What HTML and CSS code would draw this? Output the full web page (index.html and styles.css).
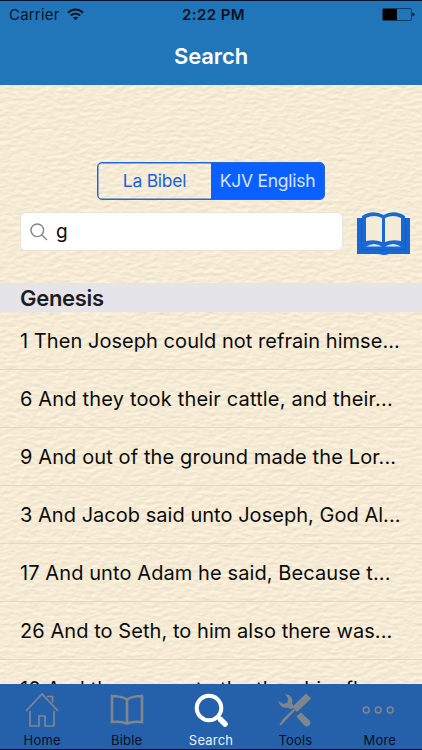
FILE: index.html
```html
<!DOCTYPE html>
<html lang="en">
<head>
    <meta charset="UTF-8">
    <meta name="viewport" content="width=device-width, initial-scale=1.0">
    <title>Search</title>
    <link rel="stylesheet" href="styles.css">
</head>
<body>
    <!-- Paper background -->
    <svg class="paper" width="422" height="750" aria-hidden="true">
        <filter id="paper" x="0" y="0" width="100%" height="100%" color-interpolation-filters="sRGB">
            <feTurbulence type="fractalNoise" baseFrequency="0.13 0.28" numOctaves="2" seed="8" result="noise"/>
            <feDiffuseLighting in="noise" surfaceScale="0.24" diffuseConstant="1.13" lighting-color="#f6ecd6">
                <feDistantLight azimuth="250" elevation="62"/>
            </feDiffuseLighting>
        </filter>
        <rect width="422" height="750" filter="url(#paper)"/>
    </svg>

    <div class="screen">
        <header class="header">
            <div class="status">
                <div class="carrier">
                    <span>Carrier</span>
                    <svg width="17" height="13" viewBox="0 0 17 13" fill="none" stroke="#06131f" stroke-width="2">
                        <path d="M1 4.7C5.3.4 11.7.4 16 4.7"/>
                        <path d="M3.8 7.6c2.8-2.6 6.6-2.6 9.4 0"/>
                        <path d="M8.5 12.2 5.9 9.6c1.5-1.3 3.7-1.3 5.2 0z" fill="#06131f" stroke="none"/>
                    </svg>
                </div>
                <div class="time">2:22 PM</div>
                <svg class="battery" width="33" height="13" viewBox="0 0 33 13">
                    <rect x=".5" y=".5" width="29" height="12" rx="1.5" fill="none" stroke="#123c5e"/>
                    <rect x="1" y="1" width="14" height="11" fill="#000"/>
                    <path d="M30.5 4.5q2 .3 2 2t-2 2z" fill="#06131f"/>
                </svg>
            </div>
            <h1 class="title">Search</h1>
        </header>

        <main class="content">
            <div class="segmented">
                <div class="segment">La Bibel</div>
                <div class="segment active">KJV English</div>
            </div>
            <div class="search-row">
                <div class="search-box">
                    <svg width="18" height="18" viewBox="0 0 18 18" fill="none" stroke="#85858a" stroke-width="1.4">
                        <circle cx="7.3" cy="7.3" r="6.3"/>
                        <path d="m11.9 11.9 5.1 5.1"/>
                    </svg>
                    <span>g</span>
                </div>
                <svg class="book" width="54" height="44" viewBox="0 0 54 44">
                    <path d="M0 6h5V4Q16-3 26.500 3 37-3 48 4v2h5v36H32q-5 2-10 0H0z" fill="#1769d6"/>
                    <path d="M9 6q8-4 16 0v24q-7-3-16-1zM28 6q8-4 16 0v23q-9-2-16 1z" fill="#f4ecd6"/>
                    <path d="M9 34.500q8-5 16 0zM28 34.500q8-5 16 0z" fill="#e4e7e5"/>
                    <path d="M4.500 6v31.500H20q6 2.500 13 0h15.500V6" fill="none" stroke="#1059c2" stroke-width=".7"/>
                </svg>
            </div>

            <h2 class="section">Genesis</h2>
            <ul class="verses">
                <li class="verse v1">1 Then Joseph could not refrain himse...</li>
                <li class="verse v2">6 And they took their cattle, and their...</li>
                <li class="verse v3">9 And out of the ground made the Lor...</li>
                <li class="verse v4">3 And Jacob said unto Joseph, God Al...</li>
                <li class="verse v5">17 And unto Adam he said, Because t...</li>
                <li class="verse v6">26 And to Seth, to him also there was...</li>
                <li class="verse v7">10 And they came to the threshingfl...</li>
            </ul>
        </main>

        <nav class="tabs">
            <div class="tab">
                <svg width="36" height="36" viewBox="0 0 36 36" fill="none" stroke="#7f868e" stroke-width="1.7">
                    <path d="M2 19 18 2l16 17"/>
                    <path d="M6 19v15h9V24h6v10h9V19M23 4.500h5.500v6"/>
                </svg>
                <span>Home</span>
            </div>
            <div class="tab">
                <svg width="36" height="36" viewBox="0 0 36 36" fill="none" stroke="#7f868e" stroke-width="2.6">
                    <path d="M18 7.500Q12 4 3 4v26q9-1 15 1.500Q24 29 33 30V4q-9 0-15 3.500zv24"/>
                </svg>
                <span>Bible</span>
            </div>
            <div class="tab active">
                <svg width="36" height="36" viewBox="0 0 36 36" fill="none" stroke="#fff">
                    <circle cx="16" cy="16" r="12.300" stroke-width="4"/>
                    <path d="m24.500 24.500 1.500 1.500" stroke-width="4"/>
                    <path d="m27.500 27.500 4.500 4.500" stroke-width="5.500" stroke-linecap="round"/>
                </svg>
                <span>Search</span>
            </div>
            <div class="tab">
                <svg width="36" height="36" viewBox="0 0 36 36" fill="#7f868e">
                    <path d="M8 2Q17 3 15 11.500l2 3-3 3-3-2Q3 17 1.500 9l5 3 4-1.500.500-4z"/>
                    <path d="m29 1.500 5 5-14 13.500-5-5z"/>
                    <path d="m16.500 17 1.500 1.500L8 29l-4.500 4.500-1-1L6 27z"/>
                    <path d="m24 20.500 8.500 8q2 3-.5 5t-5-.5l-7.500-8.500z"/>
                </svg>
                <span>Tools</span>
            </div>
            <div class="tab">
                <svg width="36" height="36" viewBox="0 0 36 36" fill="none" stroke="#7f868e" stroke-width="1.500">
                    <circle cx="4.200" cy="18" r="2.900"/>
                    <circle cx="16.200" cy="18" r="2.900"/>
                    <circle cx="28.200" cy="18" r="2.900"/>
                </svg>
                <span>More</span>
            </div>
        </nav>
    </div>
</body>
</html>
```
FILE: styles.css
```css
body {
    margin: 0;
    font-family: Inter, "Liberation Sans", sans-serif;
    color: #0b0b0b;
    background-color: #f4ead2;
}
.paper {
    position: absolute;
    top: 0;
    left: 0;
    z-index: -1;
}
.screen {
    display: flex;
    flex-direction: column;
    width: 422px;
    height: 750px;
    box-sizing: border-box;
    overflow: hidden;
    border-bottom: 1px solid #05091c;
}
.header {
    flex: none;
    height: 85px;
    box-sizing: border-box;
    border-top: 1px solid #071333;
    background-color: #2176ba;
}
.status {
    display: grid;
    grid-template-columns: 1fr auto 1fr;
    align-items: center;
    height: 27px;
    padding: 0 7px 0 9px;
    color: #06131f;
    font-size: 15px;
}
.carrier {
    display: flex;
    align-items: center;
    gap: 7px;
    letter-spacing: 0.2px;
}
.time {
    padding-left: 3px;
    font-weight: 600;
    letter-spacing: 0.4px;
}
.battery {
    justify-self: end;
}
.title {
    margin: 14px 0 0;
    color: #fff;
    font-size: 22px;
    font-weight: 600;
    line-height: 28px;
    text-align: center;
    letter-spacing: -0.1px;
}
.content {
    flex: 1;
    min-height: 0;
    overflow: hidden;
}
.segmented {
    display: flex;
    width: 228px;
    height: 38px;
    box-sizing: border-box;
    margin: 77px 0 0 97px;
    border: 1px solid #2468d8;
    border-radius: 5px;
    box-shadow: inset 0 0 0 0.5px #2468d8;
}
.segment {
    flex: 1;
    color: #1d62dc;
    font-size: 17.5px;
    line-height: 36px;
    text-align: center;
    letter-spacing: -0.25px;
}
.segment.active {
    border-radius: 0 4px 4px 0;
    color: #d5e4ff;
    background-color: #0a60ff;
}
.search-row {
    display: flex;
    gap: 14px;
    height: 44px;
    margin: 12px 0 0 20px;
}
.search-box {
    display: flex;
    align-items: center;
    gap: 8px;
    width: 323px;
    height: 39px;
    box-sizing: border-box;
    padding-left: 9px;
    border: 1px solid #e9e4da;
    border-radius: 6px;
    background-color: #fff;
    font-size: 19px;
}
.section {
    height: 29px;
    margin: 27px 0 0;
    padding-left: 20px;
    background-color: #e5e4e8;
    color: #1c1d20;
    font-size: 22px;
    font-weight: 600;
    line-height: 31px;
    letter-spacing: -0.3px;
}
.verses {
    margin: 0;
    padding: 0;
    list-style: none;
}
.verse {
    height: 58px;
    box-sizing: border-box;
    padding-left: 20px;
    border-bottom: 1px solid #e0d9c6;
    font-size: 20px;
    line-height: 58px;
    white-space: nowrap;
}
.v1 {
    letter-spacing: 0.05px;
}
.v2 {
    letter-spacing: 0.17px;
}
.v3 {
    letter-spacing: 0.11px;
}
.v4 {
    letter-spacing: 0.03px;
}
.v5 {
    letter-spacing: 0.09px;
}
.v6 {
    letter-spacing: 0.06px;
}
.v7 {
    letter-spacing: 0.1px;
}
.tabs {
    display: flex;
    flex: none;
    height: 65px;
    background-color: #2561ab;
}
.tab {
    display: flex;
    flex: 1;
    flex-direction: column;
    align-items: center;
    padding-top: 8px;
    color: #06101f;
    font-size: 13px;
    line-height: 16px;
    letter-spacing: 0.2px;
}
.tab span {
    margin-top: 4px;
}
.tab.active {
    color: #e8f1fc;
}
```
